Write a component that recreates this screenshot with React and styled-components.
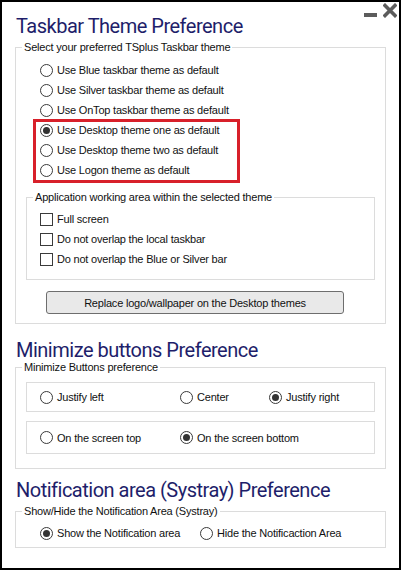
import styled, { createGlobalStyle } from "styled-components";

const GlobalStyle = createGlobalStyle`
  body {
    margin: 0;
    background: #fff;
  }
`;

const Window = styled.div`
  position: relative;
  width: 401px;
  height: 570px;
  box-sizing: border-box;
  border: 2px solid #000;
  background: #fff;
  padding: 11px 13px 0 13px;
  font-family: "Liberation Sans", Arial, sans-serif;
  font-size: 11px;
  letter-spacing: -0.2px;
  color: #111;
`;

const MinButton = styled.div`
  position: absolute;
  top: 11px;
  right: 22px;
  width: 13px;
  height: 4px;
  background: #5c5c5c;
`;

const CloseButton = styled.svg`
  position: absolute;
  top: 1px;
  right: 2px;
`;

const Title = styled.h2`
  margin: ${(p) => p.$top || 0}px 0 0 1px;
  font-family: Roboto, "Liberation Sans", sans-serif;
  font-size: 20px;
  font-weight: normal;
  line-height: 22px;
  letter-spacing: -0.5px;
  color: #1e1e6a;
`;

const Group = styled.fieldset`
  margin: ${(p) => p.$top || 0}px 0 0;
  padding: 0;
  border: 1px solid #dcdcdc;
  min-width: 0;
`;

const Legend = styled.legend`
  margin-left: 6px;
  padding: 0 2px;
  line-height: 14px;
`;

const Body = styled.div`
  padding: ${(p) => p.$pad};
`;

const List = styled.div`
  padding-left: ${(p) => p.$indent || 0}px;
`;

const Highlight = styled.div`
  position: relative;
`;

const RedBox = styled.div`
  position: absolute;
  top: -1px;
  bottom: -3px;
  left: -7px;
  width: 207px;
  box-sizing: border-box;
  border: 3px solid #d8202a;
  pointer-events: none;
`;

const Row = styled.label`
  display: flex;
  align-items: center;
  gap: 4px;
  height: 20px;
  white-space: nowrap;
`;

const Circle = styled.span`
  position: relative;
  width: 13px;
  height: 13px;
  box-sizing: border-box;
  border: 1px solid #3a3a3a;
  border-radius: 50%;
  background: #fff;
  flex: none;

  &::after {
    content: "";
    display: ${(p) => (p.$on ? "block" : "none")};
    position: absolute;
    top: 2px;
    left: 2px;
    width: 7px;
    height: 7px;
    border-radius: 50%;
    background: #333;
  }
`;

const Box = styled.span`
  width: 13px;
  height: 13px;
  box-sizing: border-box;
  border: 1px solid #3a3a3a;
  background: #fff;
  flex: none;
`;

const Button = styled.button`
  display: block;
  margin: 11px 0 0 20px;
  width: 298px;
  height: 23px;
  box-sizing: border-box;
  border: 1px solid #6e6e6e;
  border-radius: 3px;
  background: #e9e9e9;
  font-family: inherit;
  font-size: 11px;
  letter-spacing: -0.2px;
  color: #111;
  padding: 0;
`;

const Panel = styled.div`
  display: grid;
  grid-template-columns: ${(p) => p.$cols};
  align-items: center;
  height: ${(p) => p.$h}px;
  box-sizing: border-box;
  margin-top: ${(p) => p.$top || 0}px;
  padding-left: ${(p) => p.$indent ?? 13}px;
  border: ${(p) => (p.$plain ? "none" : "1px solid #dcdcdc")};
`;

const Radio = ({ on, children }) => (
  <Row>
    <Circle $on={on} />
    {children}
  </Row>
);

const Check = ({ children }) => (
  <Row>
    <Box />
    {children}
  </Row>
);

export default function App() {
  return (
    <>
      <GlobalStyle />
      <Window>
        <MinButton />
        <CloseButton width="14" height="15" viewBox="0 0 14 15">
          <path d="M2 2.5 L12 12.5 M12 2.5 L2 12.5" stroke="#5c5c5c" strokeWidth="3.6" strokeLinecap="square" />
        </CloseButton>

        <Title $top={2}>Taskbar Theme Preference</Title>
        <Group $top={3}>
          <Legend>Select your preferred TSplus Taskbar theme</Legend>
          <Body $pad="6px 10px 9px 10px">
            <List $indent={14}>
              <Radio>Use Blue taskbar theme as default</Radio>
              <Radio>Use Silver taskbar theme as default</Radio>
              <Radio>Use OnTop taskbar theme as default</Radio>
              <Highlight>
                <Radio on>Use Desktop theme one as default</Radio>
                <Radio>Use Desktop theme two as default</Radio>
                <Radio>Use Logon theme as default</Radio>
                <RedBox />
              </Highlight>
            </List>
            <Group $top={10}>
              <Legend>Application working area within the selected theme</Legend>
              <Body $pad="5px 13px 10px">
                <Check>Full screen</Check>
                <Check>Do not overlap the local taskbar</Check>
                <Check>Do not overlap the Blue or Silver bar</Check>
              </Body>
            </Group>
            <Button>Replace logo/wallpaper on the Desktop themes</Button>
          </Body>
        </Group>

        <Title $top={15}>Minimize buttons Preference</Title>
        <Group $top={-1}>
          <Legend>Minimize Buttons preference</Legend>
          <Body $pad="8px 10px 14px">
            <Panel $cols="140px 89px auto" $h={30}>
              <Radio>Justify left</Radio>
              <Radio>Center</Radio>
              <Radio on>Justify right</Radio>
            </Panel>
            <Panel $cols="140px auto" $h={33} $top={9}>
              <Radio>On the screen top</Radio>
              <Radio on>On the screen bottom</Radio>
            </Panel>
          </Body>
        </Group>

        <Title $top={10}>Notification area (Systray) Preference</Title>
        <Group $top={3}>
          <Legend>Show/Hide the Notification Area (Systray)</Legend>
          <Body $pad="5px 0 4px">
            <Panel $cols="160px auto" $h={20} $indent={24} $plain>
              <Radio on>Show the Notification area</Radio>
              <Radio>Hide the Notificaction Area</Radio>
            </Panel>
          </Body>
        </Group>
      </Window>
    </>
  );
}
